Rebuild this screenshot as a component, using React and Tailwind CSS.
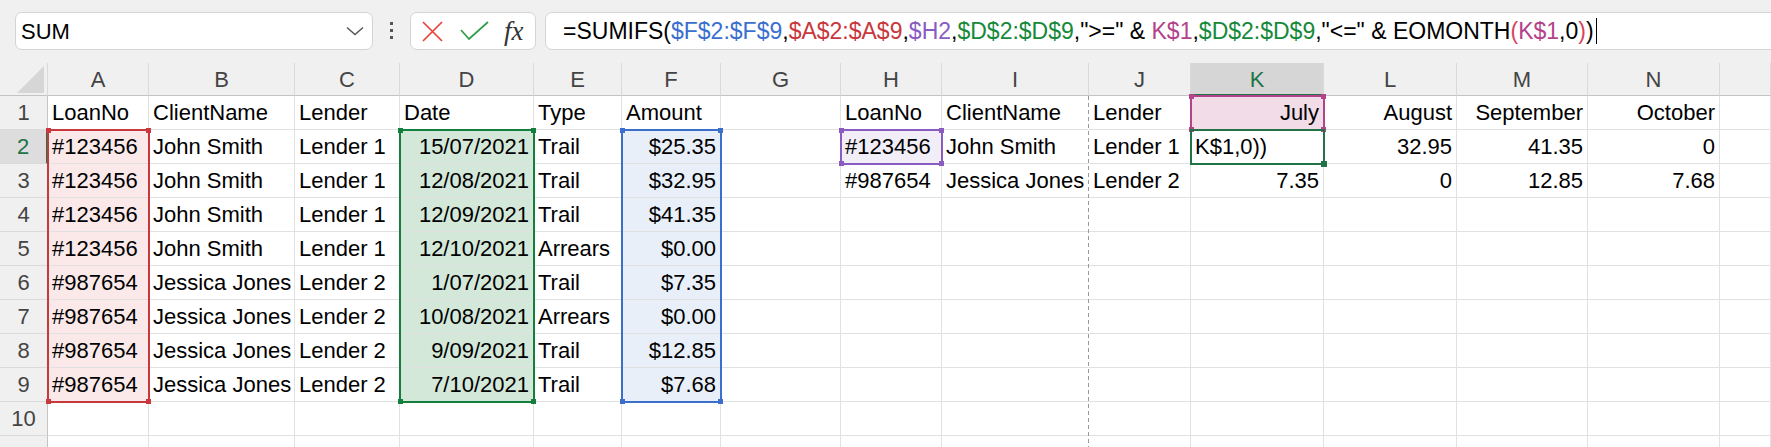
import React from 'react';

// column letters shown in the header (O is cut off at the right edge)
const COLS = ['A', 'B', 'C', 'D', 'E', 'F', 'G', 'H', 'I', 'J', 'K', 'L', 'M', 'N', ''];

const GRID =
  'grid grid-cols-[48px_101px_146px_105px_134px_88px_99px_120px_101px_147px_102px_133px_133px_131px_132px_1fr] grid-rows-[33px_repeat(11,34px)]';

const ROWS = [
  ['LoanNo', 'ClientName', 'Lender', 'Date', 'Type', 'Amount', '', 'LoanNo', 'ClientName', 'Lender', 'July', 'August', 'September', 'October', ''],
  ['#123456', 'John Smith', 'Lender 1', '15/07/2021', 'Trail', '$25.35', '', '#123456', 'John Smith', 'Lender 1', 'K$1,0))', '32.95', '41.35', '0', ''],
  ['#123456', 'John Smith', 'Lender 1', '12/08/2021', 'Trail', '$32.95', '', '#987654', 'Jessica Jones', 'Lender 2', '7.35', '0', '12.85', '7.68', ''],
  ['#123456', 'John Smith', 'Lender 1', '12/09/2021', 'Trail', '$41.35', '', '', '', '', '', '', '', '', ''],
  ['#123456', 'John Smith', 'Lender 1', '12/10/2021', 'Arrears', '$0.00', '', '', '', '', '', '', '', '', ''],
  ['#987654', 'Jessica Jones', 'Lender 2', '1/07/2021', 'Trail', '$7.35', '', '', '', '', '', '', '', '', ''],
  ['#987654', 'Jessica Jones', 'Lender 2', '10/08/2021', 'Arrears', '$0.00', '', '', '', '', '', '', '', '', ''],
  ['#987654', 'Jessica Jones', 'Lender 2', '9/09/2021', 'Trail', '$12.85', '', '', '', '', '', '', '', '', ''],
  ['#987654', 'Jessica Jones', 'Lender 2', '7/10/2021', 'Trail', '$7.68', '', '', '', '', '', '', '', '', ''],
  Array(15).fill(''),
  Array(15).fill(''),
];

function fillFor(r, c) {
  if (c === 0 && r >= 2 && r <= 9) return 'bg-[#fbe9ea]';
  if (c === 3 && r >= 2 && r <= 9) return 'bg-[#d3e8d8]';
  if (c === 5 && r >= 2 && r <= 9) return 'bg-[#e8eff9]';
  if (c === 7 && r === 2) return 'bg-[#f2eef7]';
  if (c === 10 && r === 1) return 'bg-[#f1dce7]';
  return 'bg-white';
}

function alignRight(r, c) {
  if ((c === 3 || c === 5) && r >= 2) return true;
  if (c >= 10 && c <= 13 && !(r === 2 && c === 10)) return true;
  return false;
}

function Cell({ r, c, value }) {
  const edge = c === 8 ? 'border-r-transparent' : 'border-r-[#e1e1e1]';
  return (
    <div
      className={`flex items-center overflow-hidden whitespace-nowrap border-r border-b border-b-[#e1e1e1] px-[4px] text-black ${edge} ${fillFor(r, c)} ${
        alignRight(r, c) ? 'justify-end' : 'justify-start'
      }`}
    >
      {value}
    </div>
  );
}

// coloured reference box with the four little corner squares
function RangeBox({ place, border, dot }) {
  return (
    <div className={`relative -mx-px -my-px border-2 ${place} ${border}`}>
      <span className={`absolute -left-[3px] -top-[3px] h-[5px] w-[5px] ${dot}`} />
      <span className={`absolute -right-[3px] -top-[3px] h-[5px] w-[5px] ${dot}`} />
      <span className={`absolute -left-[3px] -bottom-[3px] h-[5px] w-[5px] ${dot}`} />
      <span className={`absolute -right-[3px] -bottom-[3px] h-[5px] w-[5px] ${dot}`} />
    </div>
  );
}

function FormulaBar() {
  return (
    <div className="flex h-[63px] items-start bg-[#f0f0f0] pt-[12px]">
      {/* name box */}
      <div className="ml-[15px] flex h-[38px] w-[358px] shrink-0 items-center justify-between rounded-[7px] border border-[#d4d4d4] bg-white pl-[5px] pr-[8px] text-[22px] text-black">
        <span>SUM</span>
        <svg width="18" height="10" viewBox="0 0 18 10">
          <polyline points="1,1.5 9,8.5 17,1.5" fill="none" stroke="#555" strokeWidth="1.4" />
        </svg>
      </div>

      {/* overflow dots */}
      <div className="ml-[17px] mt-[10px] flex shrink-0 flex-col gap-[4px]">
        <span className="h-[3px] w-[3px] bg-[#555]" />
        <span className="h-[3px] w-[3px] bg-[#555]" />
        <span className="h-[3px] w-[3px] bg-[#555]" />
      </div>

      {/* cancel / enter / fx */}
      <div className="ml-[17px] flex h-[38px] w-[126px] shrink-0 items-center rounded-[7px] border border-[#d4d4d4] bg-white">
        <svg className="ml-[11px]" width="21" height="21" viewBox="0 0 21 21">
          <path d="M1 1 L20 20 M20 1 L1 20" stroke="#e8413c" strokeWidth="1.7" fill="none" />
        </svg>
        <svg className="ml-[17px]" width="29" height="20" viewBox="0 0 29 20">
          <polyline points="1,9 9,18 28,1" fill="none" stroke="#2f9e4a" strokeWidth="1.7" />
        </svg>
        <span className="ml-[15px] font-['Liberation_Serif',serif] text-[27px] italic leading-none text-[#333]">fx</span>
      </div>

      {/* formula input */}
      <div className="-mr-[10px] ml-[9px] flex h-[38px] flex-1 items-center whitespace-nowrap rounded-[7px] border border-[#d4d4d4] bg-white pl-[17px] text-[23px] text-black">
        <span>=SUMIFS(</span>
        <span className="text-[#3a6fcf]">$F$2:$F$9</span>
        <span>,</span>
        <span className="text-[#c8383c]">$A$2:$A$9</span>
        <span>,</span>
        <span className="text-[#8a5bc0]">$H2</span>
        <span>,</span>
        <span className="text-[#168a3a]">$D$2:$D$9</span>
        <span>,"&gt;=" &amp;&nbsp;</span>
        <span className="text-[#b3438a]">K$1</span>
        <span>,</span>
        <span className="text-[#168a3a]">$D$2:$D$9</span>
        <span>,"&lt;=" &amp; EOMONTH</span>
        <span className="text-[#d8435e]">(</span>
        <span className="text-[#b3438a]">K$1</span>
        <span>,0</span>
        <span className="text-[#d8435e]">)</span>
        <span>)</span>
        <span className="ml-[2px] inline-block h-[26px] w-px bg-black" />
      </div>
    </div>
  );
}

function Sheet() {
  return (
    <div className="relative">
      <div className={`${GRID} text-[22px]`}>
        {/* select-all corner */}
        <div className="flex items-end justify-end border-r border-b border-r-[#dadada] border-b-[#c4c4c4] bg-[#f0f0f0] pb-[2px] pr-[3px]">
          <svg width="27" height="27" viewBox="0 0 27 27">
            <polygon points="27,0 27,27 0,27" fill="#d6d6d6" />
          </svg>
        </div>
        {COLS.map((letter, i) =>
          letter === 'K' ? (
            <div
              key={i}
              className="flex items-center justify-center border-r border-b-2 border-r-[#dadada] border-b-[#217346] bg-[#d6d6d6] pt-[2px] text-[#217346]"
            >
              {letter}
            </div>
          ) : (
            <div
              key={i}
              className="flex items-center justify-center border-r border-b border-r-[#dadada] border-b-[#c4c4c4] bg-[#f0f0f0] text-[#444]"
            >
              {letter}
            </div>
          )
        )}

        {ROWS.map((row, ri) => (
          <React.Fragment key={ri}>
            {ri + 1 === 2 ? (
              <div className="flex items-center justify-center border-r-2 border-b border-r-[#217346] border-b-[#dadada] bg-[#dddddd] text-[#217346]">
                {ri + 1}
              </div>
            ) : (
              <div className="flex items-center justify-center border-r border-b border-r-[#c4c4c4] border-b-[#dadada] bg-[#f0f0f0] text-[#444]">
                {/* row 11 sits below the visible edge, only its top strip shows */}
                {ri + 1 <= 10 ? ri + 1 : ''}
              </div>
            )}
            {row.map((v, ci) => (
              <Cell key={ci} r={ri + 1} c={ci} value={v} />
            ))}
          </React.Fragment>
        ))}
      </div>

      {/* range highlights and the active cell drawn over the grid */}
      <div className={`pointer-events-none absolute inset-0 ${GRID}`}>
        <div className="col-start-11 row-span-11 row-start-2 -ml-px w-px bg-[repeating-linear-gradient(to_bottom,#9a9a9a_0_4px,transparent_4px_7px)]" />
        <RangeBox place="col-start-2 row-start-3 row-span-8" border="border-[#c8383c]" dot="bg-[#c8383c]" />
        <RangeBox place="col-start-5 row-start-3 row-span-8" border="border-[#12803c]" dot="bg-[#12803c]" />
        <RangeBox place="col-start-7 row-start-3 row-span-8" border="border-[#3a70cc]" dot="bg-[#3a70cc]" />
        <RangeBox place="col-start-9 row-start-3" border="border-[#8a5bc0]" dot="bg-[#8a5bc0]" />
        <RangeBox place="col-start-12 row-start-2" border="border-[#b3438a]" dot="bg-[#b3438a]" />
        <div className="relative col-start-12 row-start-3 -mx-px -my-px border-2 border-[#217346]">
          <span className="absolute -bottom-[4px] -right-[4px] h-[6px] w-[6px] bg-[#217346]" />
        </div>
      </div>
    </div>
  );
}

export default function App() {
  return (
    <div className="h-[447px] w-full overflow-hidden bg-white font-['Liberation_Sans',Arial,sans-serif]">
      <FormulaBar />
      <Sheet />
    </div>
  );
}
